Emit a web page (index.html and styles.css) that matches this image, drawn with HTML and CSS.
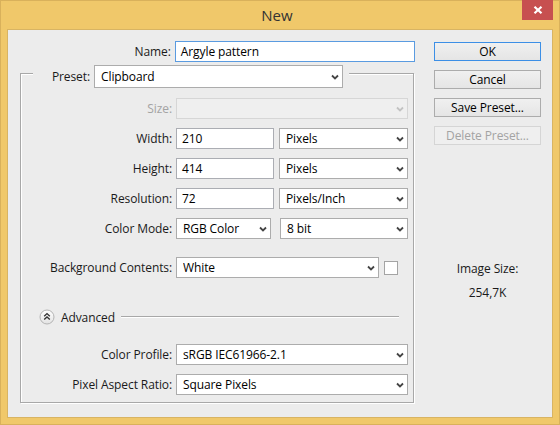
FILE: index.html
```html
<!DOCTYPE html>
<html>
<head>
<meta charset="utf-8">
<title>New</title>
<link rel="stylesheet" href="styles.css">
</head>
<body>
<div class="window">
  <div class="titlebar">
    <span class="title">New</span>
    <div class="close"><svg width="10" height="8" viewBox="0 0 10 8"><path d="M1.5 0.8 L8.5 7.2 M8.5 0.8 L1.5 7.2" stroke="#fff" stroke-width="2.2"/></svg></div>
  </div>
  <div class="client">
    <div class="main">
      <div class="row name-row">
        <span class="lbl name-lbl">Name:</span>
        <div class="field focus">Argyle pattern</div>
      </div>
      <div class="group">
        <div class="legend">
          <span class="legend-lbl">Preset:</span>
          <div class="select preset"><span class="val">Clipboard</span><svg class="chev" width="8" height="6" viewBox="0 0 8 6"><path d="M1 1.5 L4 4.5 L7 1.5"/></svg></div>
        </div>
        <div class="row size-row">
          <span class="lbl disabled">Size:</span>
          <div class="ctrls"><div class="select off grow"><span class="val"></span><svg class="chev" width="8" height="6" viewBox="0 0 8 6"><path d="M1 1.5 L4 4.5 L7 1.5"/></svg></div></div>
        </div>
        <div class="row">
          <span class="lbl">Width:</span>
          <div class="ctrls"><div class="field num">210</div><div class="select grow"><span class="val">Pixels</span><svg class="chev" width="8" height="6" viewBox="0 0 8 6"><path d="M1 1.5 L4 4.5 L7 1.5"/></svg></div></div>
        </div>
        <div class="row">
          <span class="lbl">Height:</span>
          <div class="ctrls"><div class="field num">414</div><div class="select grow"><span class="val">Pixels</span><svg class="chev" width="8" height="6" viewBox="0 0 8 6"><path d="M1 1.5 L4 4.5 L7 1.5"/></svg></div></div>
        </div>
        <div class="row">
          <span class="lbl">Resolution:</span>
          <div class="ctrls"><div class="field num">72</div><div class="select grow"><span class="val">Pixels/Inch</span><svg class="chev" width="8" height="6" viewBox="0 0 8 6"><path d="M1 1.5 L4 4.5 L7 1.5"/></svg></div></div>
        </div>
        <div class="row">
          <span class="lbl">Color Mode:</span>
          <div class="ctrls mode"><div class="select mode-sel"><span class="val">RGB Color</span><svg class="chev" width="8" height="6" viewBox="0 0 8 6"><path d="M1 1.5 L4 4.5 L7 1.5"/></svg></div><div class="select grow"><span class="val">8 bit</span><svg class="chev" width="8" height="6" viewBox="0 0 8 6"><path d="M1 1.5 L4 4.5 L7 1.5"/></svg></div></div>
        </div>
        <div class="row bg-row">
          <span class="lbl">Background Contents:</span>
          <div class="ctrls"><div class="select bg-sel"><span class="val">White</span><svg class="chev" width="8" height="6" viewBox="0 0 8 6"><path d="M1 1.5 L4 4.5 L7 1.5"/></svg></div><div class="swatch"></div></div>
        </div>
        <div class="advanced">
          <svg class="adv-icon" width="16" height="16" viewBox="0 0 16 16"><defs><linearGradient id="g" x1="0" y1="0" x2="0" y2="1"><stop offset="0" stop-color="#ffffff"/><stop offset="1" stop-color="#e2e2e2"/></linearGradient></defs><circle cx="8" cy="8" r="7" fill="url(#g)" stroke="#b4b4b4"/><path d="M5.2 7.2 L8 4.6 L10.8 7.2 M5.2 10.6 L8 8 L10.8 10.6" fill="none" stroke="#333" stroke-width="1.4"/></svg>
          <span class="adv-text">Advanced</span>
          <span class="adv-line"></span>
        </div>
        <div class="row profile-row">
          <span class="lbl">Color Profile:</span>
          <div class="ctrls"><div class="select grow"><span class="val">sRGB IEC61966-2.1</span><svg class="chev" width="8" height="6" viewBox="0 0 8 6"><path d="M1 1.5 L4 4.5 L7 1.5"/></svg></div></div>
        </div>
        <div class="row">
          <span class="lbl">Pixel Aspect Ratio:</span>
          <div class="ctrls"><div class="select grow"><span class="val">Square Pixels</span><svg class="chev" width="8" height="6" viewBox="0 0 8 6"><path d="M1 1.5 L4 4.5 L7 1.5"/></svg></div></div>
        </div>
      </div>
    </div>
    <div class="side">
      <div class="btn default">OK</div>
      <div class="btn">Cancel</div>
      <div class="btn">Save Preset...</div>
      <div class="btn off">Delete Preset...</div>
      <div class="info">
        <div class="info-lbl">Image Size:</div>
        <div class="info-val">254,7K</div>
      </div>
    </div>
  </div>
</div>
</body>
</html>
```
FILE: styles.css
```css
* { box-sizing: border-box; }
html, body { margin: 0; padding: 0; }
body {
  width: 560px;
  height: 425px;
  overflow: hidden;
  font-family: "Open Sans", "Noto Sans", sans-serif;
  font-size: 12px;
  letter-spacing: -0.1px;
  color: #1a1a1a;
  background: #f0c86a;
}
.window {
  width: 560px;
  height: 425px;
  background: #f0c86a;
  border: 1px solid #d9b15b;
  display: flex;
  flex-direction: column;
}
.titlebar {
  height: 29px;
  display: grid;
  grid-template-columns: 1fr auto 1fr;
  padding-right: 6px;
}
.title {
  grid-column: 2;
  align-self: center;
  font-size: 15px;
  letter-spacing: 0;
  color: #333;
  margin-top: -1px;
}
.close {
  grid-column: 3;
  justify-self: end;
  align-self: start;
  width: 31px;
  height: 20px;
  margin-top: -1px;
  background: #c75050;
  display: flex;
  align-items: center;
  justify-content: center;
}
.client {
  margin: 0 7px;
  height: 387px;
  background: #ececec;
  box-shadow: 0 0 0 1px #d8b463;
  display: flex;
}
.main {
  width: 407px;
  padding-left: 12px;
}
.row {
  display: flex;
  align-items: center;
  height: 21px;
}
.lbl {
  width: 151px;
  margin-right: 4px;
  text-align: right;
  white-space: nowrap;
}
.name-row { margin-top: 11px; }
.name-lbl { width: 152px; }
.disabled { color: #a3a3a3; }
.field {
  height: 21px;
  border: 1px solid #abadb3;
  background: #fff;
  padding-left: 5px;
  line-height: 19px;
  color: #000;
  white-space: nowrap;
}
.focus {
  width: 242px;
  border-color: #5a9be0;
}
.group {
  margin-top: 11px;
  width: 394px;
  height: 330px;
  border: 1px solid #a8a8a8;
  box-shadow: inset 1px 1px 0 #fff, 1px 1px 0 #fff;
}
.legend {
  display: flex;
  align-items: center;
  width: fit-content;
  margin-top: -9px;
  margin-left: 12px;
  padding-right: 6px;
  background: #ececec;
}
.legend-lbl {
  width: 57px;
  margin-right: 4px;
  text-align: right;
}
.select {
  display: flex;
  align-items: center;
  height: 21px;
  background: #fff;
  border: 1px solid #acacac;
  padding: 0 3px 0 6px;
  color: #000;
  white-space: nowrap;
}
.select .val { flex: 1; overflow: hidden; }
.chev path { fill: none; stroke: #444; stroke-width: 1.8; }
.select.off { background: #efefef; border-color: #d6d6d6; }
.select.off .chev path { stroke: #c2c2c2; }
.preset { width: 249px; height: 23px; }
.ctrls {
  flex: 1;
  display: flex;
  align-items: center;
  gap: 5px;
  margin-right: 5px;
}
.grow { flex: 1; }
.size-row { margin-top: 10px; }
.row + .row { margin-top: 9px; }
.num { width: 98px; }
.ctrls.mode { gap: 9px; }
.mode-sel { width: 95px; }
.row.bg-row { margin-top: 18px; }
.bg-sel { width: 203px; }
.swatch {
  width: 14px;
  height: 14px;
  background: #fff;
  border: 1px solid #a4a4a4;
}
.advanced {
  display: flex;
  align-items: center;
  height: 16px;
  margin-top: 31px;
  padding-left: 18px;
  margin-right: 14px;
}
.adv-icon { flex: none; }
.adv-text { margin-left: 6px; }
.adv-line {
  flex: 1;
  margin-left: 6px;
  height: 2px;
  border-top: 1px solid #a8a8a8;
  border-bottom: 1px solid #fff;
}
.row.profile-row { margin-top: 19px; }
.side {
  width: 137px;
  padding: 12px 11px 0 19px;
  display: flex;
  flex-direction: column;
}
.btn {
  height: 19px;
  margin-bottom: 9px;
  border: 1px solid #acacac;
  background: linear-gradient(#f0f0f0, #e5e5e5);
  text-align: center;
  line-height: 17px;
  color: #000;
}
.btn.default { border-color: #3c8fe6; }
.btn.off {
  border-color: #d5d5d5;
  background: #efefef;
  color: #a3a3a3;
}
.info {
  margin-top: 107px;
  text-align: center;
  line-height: 16px;
}
.info-val { margin-top: 8px; }
```
